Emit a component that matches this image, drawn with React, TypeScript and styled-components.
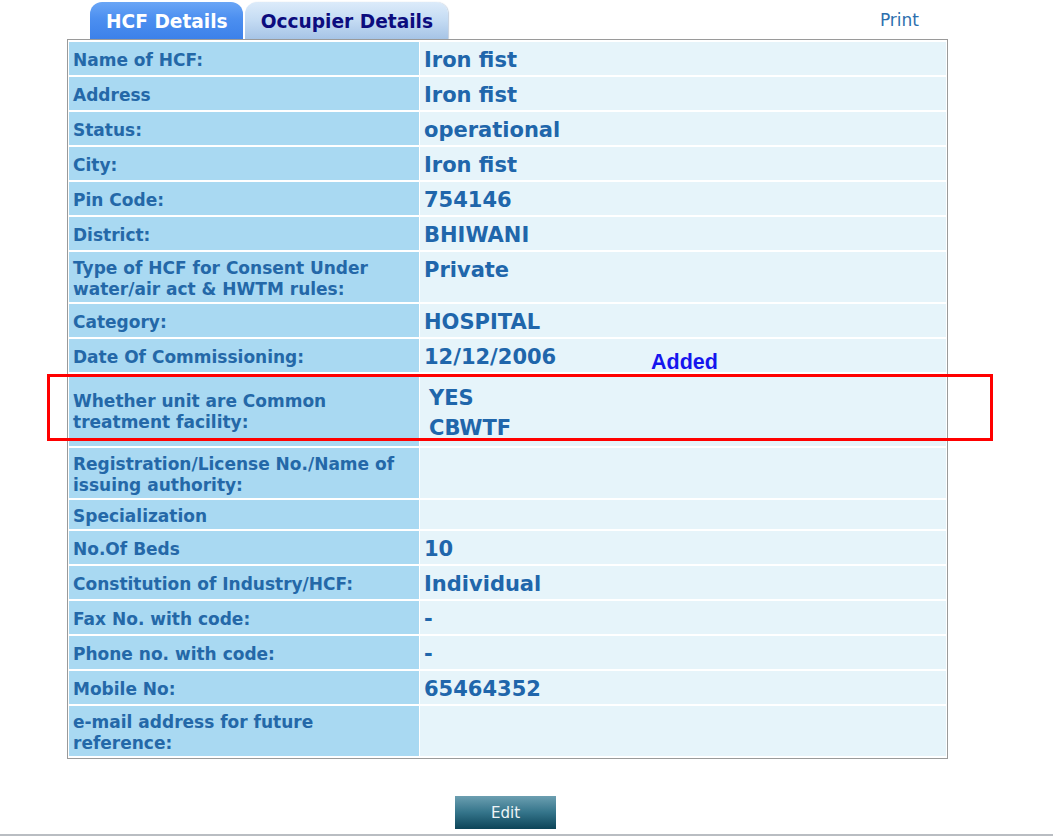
import React from "react";
import styled, { createGlobalStyle } from "styled-components";

const GlobalStyle = createGlobalStyle`
  html, body {
    margin: 0;
    padding: 0;
    background: #ffffff;
  }
  body {
    font-family: "DejaVu Sans", Verdana, sans-serif;
  }
`;

const Page = styled.div`
  position: relative;
  width: 1053px;
  height: 836px;
  overflow: hidden;
  background: #ffffff;
`;

const Content = styled.div`
  width: 881px;
  margin-left: 67px;
  display: flex;
  flex-direction: column;
`;

const Header = styled.div`
  height: 39px;
  display: flex;
  align-items: flex-end;
  justify-content: space-between;
  padding-left: 23px;
  padding-right: 29px;
`;

const Tabs = styled.div`
  display: flex;
  gap: 2px;
  align-items: flex-end;
`;

const Tab = styled.div<{ $active?: boolean }>`
  height: 37px;
  box-sizing: border-box;
  padding: 1px 15px 0 16px;
  display: flex;
  align-items: center;
  border-radius: 12px 12px 0 0;
  font-size: 18.6px;
  font-weight: bold;
  color: ${(p) => (p.$active ? "#ffffff" : "#0c0c7e")};
  background: ${(p) =>
    p.$active
      ? "linear-gradient(to bottom, #6aa6f6 0%, #4c8ff0 45%, #3c81ea 100%)"
      : "linear-gradient(to bottom, #dcebfa 0%, #c4dbf3 50%, #a6c4e6 100%)"};
  box-shadow: ${(p) => (p.$active ? "none" : "1px 0 1px rgba(90,120,160,0.35)")};
`;

const PrintLink = styled.a`
  align-self: flex-start;
  margin-top: 10px;
  font-size: 17px;
  line-height: 20px;
  color: #2d6fae;
  text-decoration: none;
  cursor: pointer;
`;

const Table = styled.table`
  width: 881px;
  border: 1px solid #9a9a9a;
  border-collapse: separate;
  border-spacing: 1px 2px;
  background: #ffffff;
  table-layout: fixed;
`;

const LabelCell = styled.td`
  width: 350px;
  box-sizing: border-box;
  background: #a9d9f2;
  color: #2468a8;
  font-size: 17px;
  font-weight: bold;
  line-height: 21px;
  padding: 6px 4px 2px 4px;
  vertical-align: middle;
`;

const ValueCell = styled.td<{ $stacked?: boolean }>`
  box-sizing: border-box;
  background: #e6f4fa;
  color: #2066ab;
  font-size: 21px;
  font-weight: bold;
  line-height: ${(p) => (p.$stacked ? "30px" : "25px")};
  padding: ${(p) => (p.$stacked ? "9px 4px 3px 9px" : "6px 4px 2px 4px")};
  vertical-align: top;
`;

const ValueLine = styled.div`
  white-space: nowrap;
`;

const Footer = styled.div`
  display: flex;
  justify-content: center;
  width: 881px;
  margin-left: 67px;
  margin-top: 37px;
`;

const EditButton = styled.button`
  width: 101px;
  height: 33px;
  border: none;
  margin: 0 0 0 -4px;
  padding: 0;
  font-family: "DejaVu Sans", Verdana, sans-serif;
  font-size: 15px;
  color: #eef4f6;
  background: linear-gradient(to bottom, #6c9fb1 0%, #34748a 50%, #0c4458 100%);
  cursor: pointer;
`;

const BottomRule = styled.div`
  margin-top: 5px;
  height: 2px;
  background: #b9bdc2;
`;

const RedBox = styled.div`
  position: absolute;
  left: 47px;
  top: 374px;
  width: 946px;
  height: 67px;
  box-sizing: border-box;
  border: 3px solid #ff0000;
  pointer-events: none;
`;

const AddedNote = styled.div`
  position: absolute;
  left: 651px;
  top: 352px;
  font-family: "Liberation Sans", Arial, sans-serif;
  font-weight: bold;
  font-size: 21.5px;
  line-height: 21px;
  color: #1515ee;
`;

type Row = { label: string[]; value: string[]; stacked?: boolean };

const rows: Row[] = [
  { label: ["Name of HCF:"], value: ["Iron fist"] },
  { label: ["Address"], value: ["Iron fist"] },
  { label: ["Status:"], value: ["operational"] },
  { label: ["City:"], value: ["Iron fist"] },
  { label: ["Pin Code:"], value: ["754146"] },
  { label: ["District:"], value: ["BHIWANI"] },
  {
    label: ["Type of HCF for Consent Under", "water/air act & HWTM rules:"],
    value: ["Private"],
  },
  { label: ["Category:"], value: ["HOSPITAL"] },
  { label: ["Date Of Commissioning:"], value: ["12/12/2006"] },
  {
    label: ["Whether unit are Common", "treatment facility:"],
    value: ["YES", "CBWTF"],
    stacked: true,
  },
  {
    label: ["Registration/License No./Name of", "issuing authority:"],
    value: [],
  },
  { label: ["Specialization"], value: [] },
  { label: ["No.Of Beds"], value: ["10"] },
  { label: ["Constitution of Industry/HCF:"], value: ["Individual"] },
  { label: ["Fax No. with code:"], value: ["-"] },
  { label: ["Phone no. with code:"], value: ["-"] },
  { label: ["Mobile No:"], value: ["65464352"] },
  { label: ["e-mail address for future", "reference:"], value: [] },
];

export default function App() {
  return (
    <Page>
      <GlobalStyle />
      <Content>
        <Header>
          <Tabs>
            <Tab $active>HCF Details</Tab>
            <Tab>Occupier Details</Tab>
          </Tabs>
          <PrintLink>Print</PrintLink>
        </Header>
        <Table>
          <tbody>
            {rows.map((r, i) => (
              <tr key={i}>
                <LabelCell>
                  {r.label.map((l, j) => (
                    <React.Fragment key={j}>
                      {j > 0 && <br />}
                      {l}
                    </React.Fragment>
                  ))}
                </LabelCell>
                <ValueCell $stacked={r.stacked}>
                  {r.value.map((v, j) => (
                    <ValueLine key={j}>{v}</ValueLine>
                  ))}
                </ValueCell>
              </tr>
            ))}
          </tbody>
        </Table>
      </Content>
      <Footer>
        <EditButton>Edit</EditButton>
      </Footer>
      <BottomRule />
      <AddedNote>Added</AddedNote>
      <RedBox />
    </Page>
  );
}
